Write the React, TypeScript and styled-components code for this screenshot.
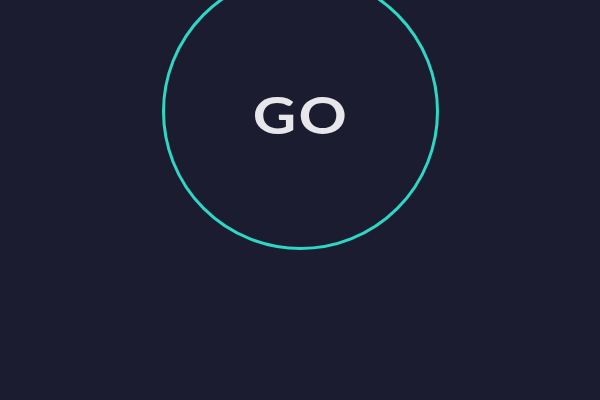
import styled, { createGlobalStyle } from 'styled-components'

const GlobalStyle = createGlobalStyle`
  html, body {
    margin: 0;
    padding: 0;
    background: #1b1c30;
  }
`

const Screen = styled.div`
  width: 600px;
  height: 400px;
  background: #1b1c30;
  display: flex;
  flex-direction: column;
  align-items: center;
  overflow: hidden;
`

const GoButton = styled.button`
  width: 277px;
  height: 277px;
  margin-top: -27px;
  flex-shrink: 0;
  border-radius: 50%;
  border: 3px solid #2fd6c3;
  background: transparent;
  display: flex;
  align-items: center;
  justify-content: center;
  padding: 4px 0 0 0;
  cursor: pointer;
`

const Label = styled.span`
  display: inline-block;
  color: #e7e6ea;
  font-family: Lato, 'Liberation Sans', sans-serif;
  font-weight: 700;
  font-size: 52px;
  letter-spacing: 2px;
  padding-left: 2px;
  transform: scaleX(1.15);
`

const App = () => {
  return (
    <>
      <GlobalStyle />
      <Screen>
        <GoButton>
          <Label>GO</Label>
        </GoButton>
      </Screen>
    </>
  )
}

export default App
